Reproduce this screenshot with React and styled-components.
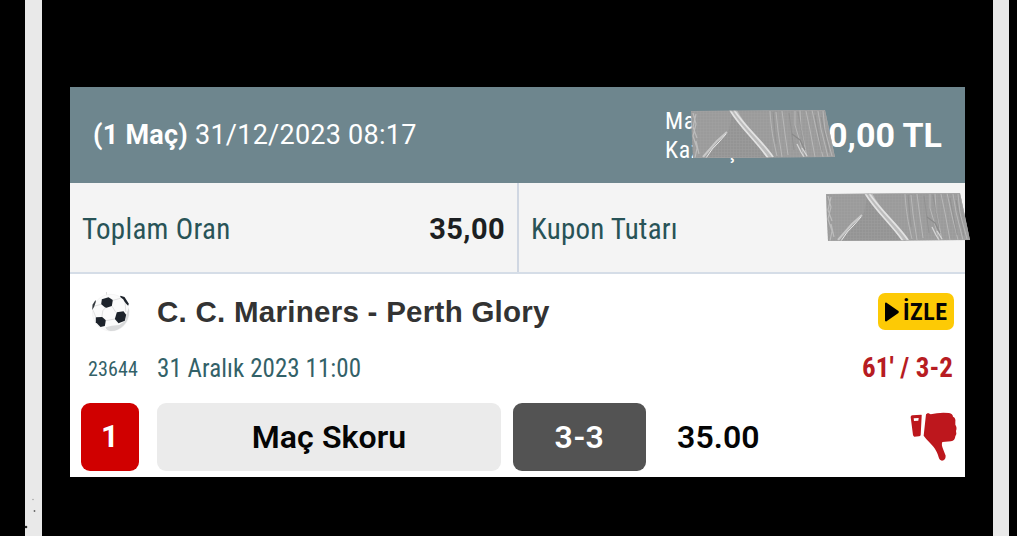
import React from 'react';
import styled, { createGlobalStyle } from 'styled-components';

const GlobalStyle = createGlobalStyle`
  * {
    box-sizing: border-box;
  }

  body {
    margin: 0;
    background: #000;
    overflow: hidden;
  }
`;

const Page = styled.div`
  position: relative;
  height: 536px;
  padding: 0 8px 0 25px;
  background: #000;
  font-family: Roboto, "Liberation Sans", sans-serif;
`;

const Frame = styled.div`
  height: 100%;
  padding: 87px 28px 0;
  border-left: 17px solid #e9e9e9;
  border-right: 16px solid #e9e9e9;
`;

const Card = styled.div`
  display: flex;
  flex-direction: column;
  width: 895px;
  height: 390px;
  background: #fff;
`;

const Text = styled.span`
  display: inline-block;
  flex: none;
  white-space: pre;
  line-height: 1.2;
  color: ${(p) => p.$color};
  font-size: ${(p) => p.$size}px;
  font-weight: ${(p) => p.$weight || 400};
  letter-spacing: ${(p) => p.$spacing || 0}px;
  font-stretch: ${(p) => (p.$condensed ? '75%' : '100%')};
  font-family: ${(p) => (p.$condensed ? '"Roboto Condensed", ' : '')}Roboto, sans-serif;
`;

const Header = styled.div`
  display: flex;
  align-items: center;
  justify-content: space-between;
  height: 96px;
  padding: 0 23px;
  background: #6e868e;
`;

const Winnings = styled.div`
  position: relative;
  display: flex;
  align-items: center;
  justify-content: space-between;
  width: 277px;
  height: 60px;
`;

const WinningsLabel = styled.div`
  display: flex;
  flex-direction: column;
  padding-top: 2px;
`;

const Amount = styled.div`
  padding-top: 1px;
`;

const Tape = styled.svg`
  position: absolute;
  top: ${(p) => p.$top}px;
  left: ${(p) => p.$left}px;
  width: 145px;
  height: 49px;
`;

const Stats = styled.div`
  display: flex;
  height: 91px;
  background: #f4f4f4;
  border-bottom: 2px solid #d5dde7;
`;

const Stat = styled.div`
  position: relative;
  display: flex;
  align-items: center;
  justify-content: space-between;
  width: ${(p) => p.$width}px;
  padding: 4px 12px 0;
  border-right: ${(p) => (p.$divider ? '2px solid #d0d7e2' : 'none')};
`;

const MatchRow = styled.div`
  display: flex;
  align-items: center;
  height: 76px;
  padding: 0 11px 0 20px;
`;

const BallIcon = styled.svg`
  width: 41px;
  height: 40px;
  margin-right: 26px;
`;

const Teams = styled.div`
  flex: 1;
  color: #333;
  font-family: "Liberation Sans", Arial, sans-serif;
  font-size: 29.5px;
  font-weight: 700;
  letter-spacing: 0.27px;
`;

const WatchButton = styled.button`
  display: flex;
  align-items: center;
  gap: 4px;
  width: 76px;
  height: 37px;
  margin-bottom: 1px;
  padding: 1px 0 0 6px;
  border: none;
  border-radius: 7px;
  background: #fdca05;
`;

const TimeRow = styled.div`
  display: flex;
  align-items: center;
  height: 36px;
  padding: 1px 12px 0 18px;
`;

const Code = styled.div`
  width: 69px;
`;

const Kickoff = styled.div`
  flex: 1;
`;

const BetRow = styled.div`
  display: flex;
  align-items: center;
  height: 68px;
  margin-top: 17px;
  padding: 0 7px 0 11px;
`;

const Box = styled.div`
  display: flex;
  align-items: center;
  justify-content: center;
  width: ${(p) => p.$width}px;
  height: 68px;
  margin-right: ${(p) => p.$gap}px;
  border-radius: 9px;
  background: ${(p) => p.$bg};
`;

const Odds = styled.div`
  flex: 1;
`;

const ThumbIcon = styled.svg`
  width: 50px;
  height: 52px;
`;

const Specks = styled.svg`
  position: absolute;
  left: 22px;
  top: 495px;
  width: 20px;
  height: 38px;
`;

function Ball() {
  return (
    <BallIcon viewBox="31 20 122 120">
      <path d="M80 20V32" stroke="#c8c8c8" strokeWidth="2" />
      <circle cx="93" cy="82" r="55" fill="#fbfbfb" stroke="#ececec" strokeWidth="1.5" />
      <path d="M147 68C154 108 123 139 92 137C83 136 79 133 77 126L96 121L118 119L136 106L142 80Z" fill="#d9dadb" />
      <path d="M66 42L86 36L99 44L96 62L78 68L64 57Z" fill="#1d232b" />
      <path d="M111 81L131 78L139 88L135 106L116 114L105 101Z" fill="#1d232b" />
      <path d="M48 96L67 95L78 105L75 122L62 125L48 111Z" fill="#1d232b" />
      <path d="M122 31L134 35L147 55L145 61L136 52L130 42L121 35Z" fill="#1d232b" />
      <path d="M47 44L38 58L37 74L43 64L48 49Z" fill="#33383d" />
      <path d="M99 45L122 39M96 62L108 81M78 66L69 76L66 95M64 57L45 62M78 106L105 101M136 52L138 80M40 75L48 96" fill="none" stroke="#d3d3d3" strokeWidth="2" />
    </BallIcon>
  );
}

function ThumbDown() {
  return (
    <ThumbIcon viewBox="202 395 150 156">
      <path
        fillRule="evenodd"
        d="M215 408L242 406Q244 407 243 411L240 467Q239 471 235 471L221 472Q218 471 217 467L210 413Q210 409 215 408ZM219 417L220 425L233 424L234 416Z"
        fill="#bd171d"
      />
      <path
        d="M256 405L262 401L270 405Q296 398 325 401Q336 403 337 412Q346 416 344 428L344 436Q350 444 346 455Q349 463 344 471Q343 485 331 486L305 488Q301 496 308 511L315 529Q315 543 304 544Q297 544 294 534C289 513 277 500 266 489Q257 480 249 469Z"
        fill="#bd171d"
      />
    </ThumbIcon>
  );
}

function DuctTape({ id, top, left }) {
  return (
    <Tape viewBox="0 0 145 49" $top={top} $left={left}>
      <defs>
        <pattern id={id} width="3" height="3" patternUnits="userSpaceOnUse">
          <path d="M0 .5H3M.5 0V3" stroke="#a6a6a6" strokeWidth=".5" opacity=".5" />
        </pattern>
        <clipPath id={`${id}-edge`}>
          <path d="M0 1L134 0L137 14L144 47L2 48L1 29Z" />
        </clipPath>
      </defs>
      <g clipPath={`url(#${id}-edge)`} fill="none">
        <rect width="145" height="49" fill="#9b9b9b" />
        <path d="M42 0L80 48H15L38 20Z" fill="#949494" />
        <rect width="145" height="49" fill={`url(#${id})`} />
        <path d="M2 3L5 14L2 26L6 38L4 48M5 4L2 17L6 28M8 44L5 31" stroke="#c9c9c9" strokeWidth="1.2" opacity=".7" />
        <path d="M38 0C48 14 66 32 76 48L83 47C72 30 55 18 46 0Z" fill="#bcbcbc" />
        <path d="M39 0C48 16 66 32 77 48M43 0C54 17 71 31 82 47" stroke="#e2e2e2" strokeWidth="1.7" />
        <path d="M12 47L26 31L36 22" stroke="#c8c8c8" strokeWidth="2" />
        <path d="M15 48Q21 38 28 32L35 24" stroke="#e9e9e9" strokeWidth="1" />
        <path d="M79 1C80 18 82 29 86 46M85 2L87 21L91 47M91 1L94 24L97 45M104 1L104 15L109 32L113 47M109 0L110 17L116 47M115 1L119 20L124 47M121 0L126 23L132 47M127 1L130 19L137 47M132 1L134 20L141 46" stroke="#b8b8b8" strokeWidth="1" />
        <path d="M82 2L85 34M98 3L103 40M107 2L113 35M124 5L131 42M130 7L138 43" stroke="#858585" strokeWidth=".8" opacity=".6" />
        <path d="M101 24L109 30L114 40" stroke="#8a8a8a" strokeWidth="1.2" />
        <path d="M106 34L110 42L113 47M111 38L116 46" stroke="#d5d5d5" strokeWidth="1.3" />
        <path d="M0 1L134 0L137 14L144 47L2 48" stroke="#a6a6a6" strokeWidth="1" />
      </g>
    </Tape>
  );
}

function App() {
  return (
    <>
      <GlobalStyle />
      <Page>
        <Frame>
          <Card>
            <Header>
              <div>
                <Text $size={27} $weight={700} $color="#fff" $spacing={0.25}>(1 Maç)</Text>
                <Text $size={27} $color="#fff" $spacing={0.25}> 31/12/2023 08:17</Text>
              </div>
              <Winnings>
                <WinningsLabel>
                  <Text $condensed $size={24} $color="#fff" $spacing={0.6}>Maks.</Text>
                  <Text $condensed $size={24} $color="#fff" $spacing={0.6}>Kazanç</Text>
                </WinningsLabel>
                <Amount>
                  <Text $size={34} $weight={700} $color="#fff">0,00 TL</Text>
                </Amount>
                <DuctTape id="tape-win" top={5} left={26} />
              </Winnings>
            </Header>

            <Stats>
              <Stat $width={449} $divider>
                <Text $condensed $size={29} $color="#285357" $spacing={0.3}>Toplam Oran</Text>
                <Text $size={29} $weight={700} $color="#1c1f22" $spacing={0.4}>35,00</Text>
              </Stat>
              <Stat $width={446}>
                <Text $condensed $size={29} $color="#285357" $spacing={0.2}>Kupon Tutarı</Text>
                <DuctTape id="tape-stake" top={10} left={307} />
              </Stat>
            </Stats>

            <MatchRow>
              <Ball />
              <Teams>C. C. Mariners - Perth Glory</Teams>
              <WatchButton>
                <svg width="15" height="20" viewBox="0 0 15 20">
                  <path d="M2 1.5L13.5 9.5Q14 10 13.5 10.5L2 18.5Z" fill="#000" stroke="#000" strokeWidth="2" strokeLinejoin="round" />
                </svg>
                <Text $condensed $size={24} $weight={700} $color="#050505" $spacing={0.5}>İZLE</Text>
              </WatchButton>
            </MatchRow>

            <TimeRow>
              <Code>
                <Text $condensed $size={20} $color="#336168" $spacing={0.1}>23644</Text>
              </Code>
              <Kickoff>
                <Text $condensed $size={25} $color="#336168" $spacing={0.06}>31 Aralık 2023 11:00</Text>
              </Kickoff>
              <Text $condensed $size={27} $weight={700} $color="#b71c22" $spacing={0.1}>61' / 3-2</Text>
            </TimeRow>

            <BetRow>
              <Box $width={58} $gap={18} $bg="#d00000">
                <Text $size={31} $weight={700} $color="#fff">1</Text>
              </Box>
              <Box $width={344} $gap={12} $bg="#ebebeb">
                <Text $size={32} $weight={600} $color="#050505" $spacing={0.1}>Maç Skoru</Text>
              </Box>
              <Box $width={133} $gap={31} $bg="#535353">
                <Text $size={32} $weight={600} $color="#fff" $spacing={0.5}>3-3</Text>
              </Box>
              <Odds>
                <Text $size={32} $weight={600} $color="#050505" $spacing={0.1}>35.00</Text>
              </Odds>
              <ThumbDown />
            </BetRow>
          </Card>
        </Frame>
        <Specks viewBox="0 0 20 38">
          <circle cx="11" cy="4.5" r=".7" fill="#999" />
          <circle cx="12.5" cy="16" r=".9" fill="#666" />
          <circle cx="4" cy="32" r="1.3" fill="#222" />
        </Specks>
      </Page>
    </>
  );
}

export default App;
